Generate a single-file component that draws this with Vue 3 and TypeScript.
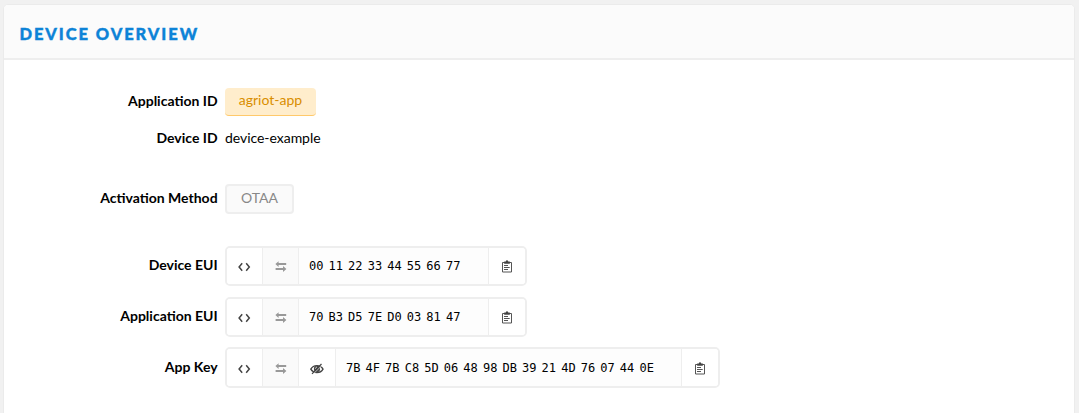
<script setup lang="ts">
interface KeyField {
  label: string
  kind: string
  bytes: string[]
  secret: boolean
}

const fields: KeyField[] = [
  { label: 'Device EUI', kind: 'dev', bytes: '00 11 22 33 44 55 66 77'.split(' '), secret: false },
  { label: 'Application EUI', kind: 'app', bytes: '70 B3 D5 7E D0 03 81 47'.split(' '), secret: false },
  { label: 'App Key', kind: 'key', bytes: '7B 4F 7B C8 5D 06 48 98 DB 39 21 4D 76 07 44 0E'.split(' '), secret: true },
]
</script>

<template>
  <main class="page">
    <section class="panel">
      <header class="head"><h1>DEVICE OVERVIEW</h1></header>
      <div class="body">
        <div class="row row-app">
          <span class="label">Application ID</span>
          <span class="pill">agriot-app</span>
        </div>
        <div class="row row-device">
          <span class="label">Device ID</span>
          <span class="plain">device-example</span>
        </div>
        <div class="row row-method">
          <span class="label">Activation Method</span>
          <span class="tag">OTAA</span>
        </div>
        <div v-for="f in fields" :key="f.label" class="row row-key" :class="f.kind">
          <span class="label">{{ f.label }}</span>
          <div class="group">
            <button class="cell code" aria-label="Toggle format">
              <svg width="14" height="12" viewBox="0 0 14 12"><path d="M5.2 2.3 2.1 6l3.1 3.7M9.2 2.3 12.3 6 9.2 9.7" fill="none" stroke="#444" stroke-width="1.5" /></svg>
            </button>
            <button class="cell muted" aria-label="Swap byte order">
              <svg width="12" height="12" viewBox="0 0 12 12"><path d="M3.6 2H11.2v1.9H3.6v2L.4 3 3.6.2zM.6 7.1H8v-2L11.4 8 8 10.9V9H.6z" fill="#999" /></svg>
            </button>
            <button v-if="f.secret" class="cell eye" aria-label="Hide key">
              <svg width="14" height="12" viewBox="0 0 14 12">
                <path d="M.8 6.2C3.5 1.6 10.2 1.4 13 6.1 10.3 10.7 3.7 10.9.8 6.2Z" fill="none" stroke="#444" stroke-width="1.4" />
                <circle cx="7" cy="5.9" r="3.1" fill="#444" />
                <path d="M5.5 5.7c0-.9.6-1.5 1.5-1.6" fill="none" stroke="#fff" stroke-width=".8" />
                <path d="M3 11.2 12 2.4" stroke="#fff" stroke-width=".7" />
                <path d="M2 10.9 11.5 1" stroke="#444" stroke-width="1.2" />
              </svg>
            </button>
            <code class="value"><span v-for="(b, i) in f.bytes" :key="i">{{ b }}</span></code>
            <button class="cell copy" aria-label="Copy">
              <svg width="10" height="13" viewBox="0 0 10 13">
                <path d="M.5 2.5h9v9.5h-9z" fill="#fff" stroke="#555" />
                <path d="M2.2 1.6h1.6Q4 .3 5 .3t1.2 1.3h1.6v2.2H2.2z" fill="#444" />
                <path d="M2 5.5h4M2 7.5h5.7M2 9.5h4" stroke="#555" />
              </svg>
            </button>
          </div>
        </div>
      </div>
    </section>
  </main>
</template>

<style>
html,
body {
  margin: 0;
  overflow: hidden;
}
</style>

<style scoped>
.page {
  box-sizing: border-box;
  height: 413px;
  padding: 4px 4px 0 3px;
  overflow: hidden;
  background: #f1f1f1;
  color: #000;
  font: 14px/20px Lato, sans-serif;
}
.panel {
  box-sizing: border-box;
  height: 430px;
  border: 1px solid #ebebeb;
  border-radius: 5px;
  background: #fff;
  overflow: hidden;
}
.head {
  box-sizing: border-box;
  height: 55px;
  border-bottom: 2px solid #eee;
  background: #fbfbfb;
  padding: 19px 0 0 15.5px;
}
h1 {
  margin: 0;
  color: #0d83d7;
  font: 900 16.5px/20px Lato, sans-serif;
  letter-spacing: 1.92px;
  -webkit-text-stroke: 0.4px #0d83d7;
}
.body {
  padding-top: 28px;
}
.row {
  display: flex;
  align-items: flex-start;
  gap: 7.4px;
}
.label {
  width: 213.6px;
  text-align: right;
  font-weight: 700;
  white-space: nowrap;
}
.plain { letter-spacing: -0.04px; }
.row-app,
.row-method {
  height: 28px;
}
.row-app .label { padding-top: 3px; }
.pill {
  box-sizing: border-box;
  width: 91px;
  height: 28px;
  border-bottom: 1px solid #ffc96b;
  border-radius: 4px;
  background: #ffedcc;
  color: #d98e00;
  line-height: 24px;
  text-align: center;
}
.row-device {
  height: 20px;
  margin-top: 12px;
}
.row-method {
  height: 30px;
  margin-top: 36px;
}
.row-method .label { padding-top: 4px; }
.tag {
  box-sizing: border-box;
  width: 69px;
  height: 30px;
  border: 2px solid #eee;
  border-radius: 4px;
  background: #fafafa;
  color: #888;
  line-height: 23px;
  text-align: center;
}
.row-key .label { padding-top: 9px; }
.dev { margin-top: 32px; }
.app { margin-top: 11px; }
.key { margin-top: 10px; }
.group {
  box-sizing: border-box;
  display: flex;
  height: 40px;
  border: 2px solid #eee;
  border-radius: 5px;
  overflow: hidden;
}
.key .group { height: 41px; }
.key .label { padding-top: 10px; }
.cell {
  box-sizing: border-box;
  display: flex;
  align-items: center;
  justify-content: center;
  width: 36px;
  margin: 0;
  padding: 2px 0 0;
  border: 0;
  border-right: 1px solid #eee;
  background: #fff;
}
.code { padding-right: 1px; }
.muted {
  padding-left: 1px;
  background: #fafafa;
}
.eye { width: 37px; }
.value {
  box-sizing: border-box;
  display: flex;
  gap: 5.12px;
  width: 190px;
  padding-left: 10px;
  border-right: 1px solid #eee;
  background: #fdfdfd;
  font: 12px/36px "DejaVu Sans Mono", monospace;
}
.key .value {
  width: 346px;
  line-height: 38px;
}
.copy {
  padding-top: 1px;
  border-right: 0;
}
</style>
